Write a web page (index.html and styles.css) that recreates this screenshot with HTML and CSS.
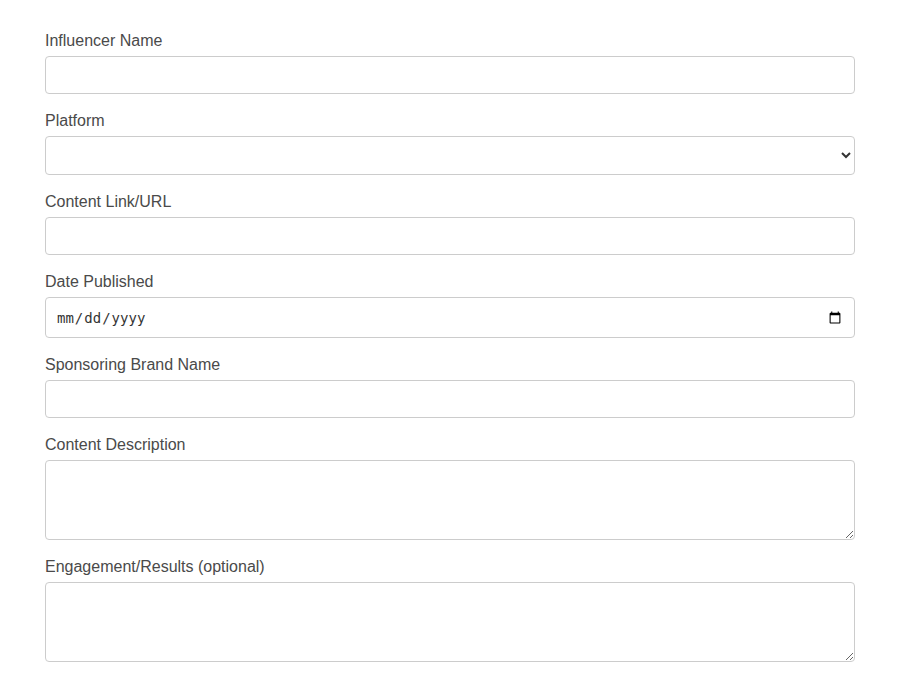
FILE: index.html
```html
<!DOCTYPE html>
<html lang="en">

<head>
  <meta charset="UTF-8" />
  <meta name="viewport" content="width=device-width, initial-scale=1.0" />
  <title>Sponsored Content Log</title>
  <link rel="stylesheet" href="styles.css">
</head>

<body>
  <form class="entryForm" id="entryForm">
    <div class="formGroup">
      <label for="influencer">Influencer Name</label>
      <input type="text" id="influencer" />
    </div>

    <div class="formGroup">
      <label for="platform">Platform</label>
      <select id="platform">
        <option value=""></option>
        <option value="instagram">Instagram</option>
        <option value="youtube">YouTube</option>
        <option value="tiktok">TikTok</option>
      </select>
    </div>

    <div class="formGroup">
      <label for="link">Content Link/URL</label>
      <input type="text" id="link" />
    </div>

    <div class="formGroup">
      <label for="published">Date Published</label>
      <input type="date" id="published" />
    </div>

    <div class="formGroup">
      <label for="brand">Sponsoring Brand Name</label>
      <input type="text" id="brand" />
    </div>

    <div class="formGroup">
      <label for="description">Content Description</label>
      <textarea id="description"></textarea>
    </div>

    <div class="formGroup">
      <label for="results">Engagement/Results (optional)</label>
      <textarea id="results"></textarea>
    </div>
  </form>
</body>

</html>
```

FILE: styles.css
```css
body {
  margin: 0;
  font-family: "Liberation Sans", Arial, sans-serif;
  background-color: #fff;
  color: #4a4a4a;
}

.entryForm {
  padding: 28px 45px;
}

.formGroup {
  margin-bottom: 14px;
}

label {
  display: block;
  font-size: 16px;
  line-height: 24px;
  padding-top: 1px;
  margin-bottom: 3px;
}

input[type="text"],
input[type="date"],
select,
textarea {
  display: block;
  box-sizing: border-box;
  width: 100%;
  height: 38px;
  padding: 8px 10px;
  border: 1px solid #ccc;
  border-radius: 4px;
  background-color: #fff;
  font-size: 14px;
  color: #333;
}

select {
  height: 39px;
}

input[type="date"] {
  height: 41px;
}

textarea {
  height: 80px;
}
```
